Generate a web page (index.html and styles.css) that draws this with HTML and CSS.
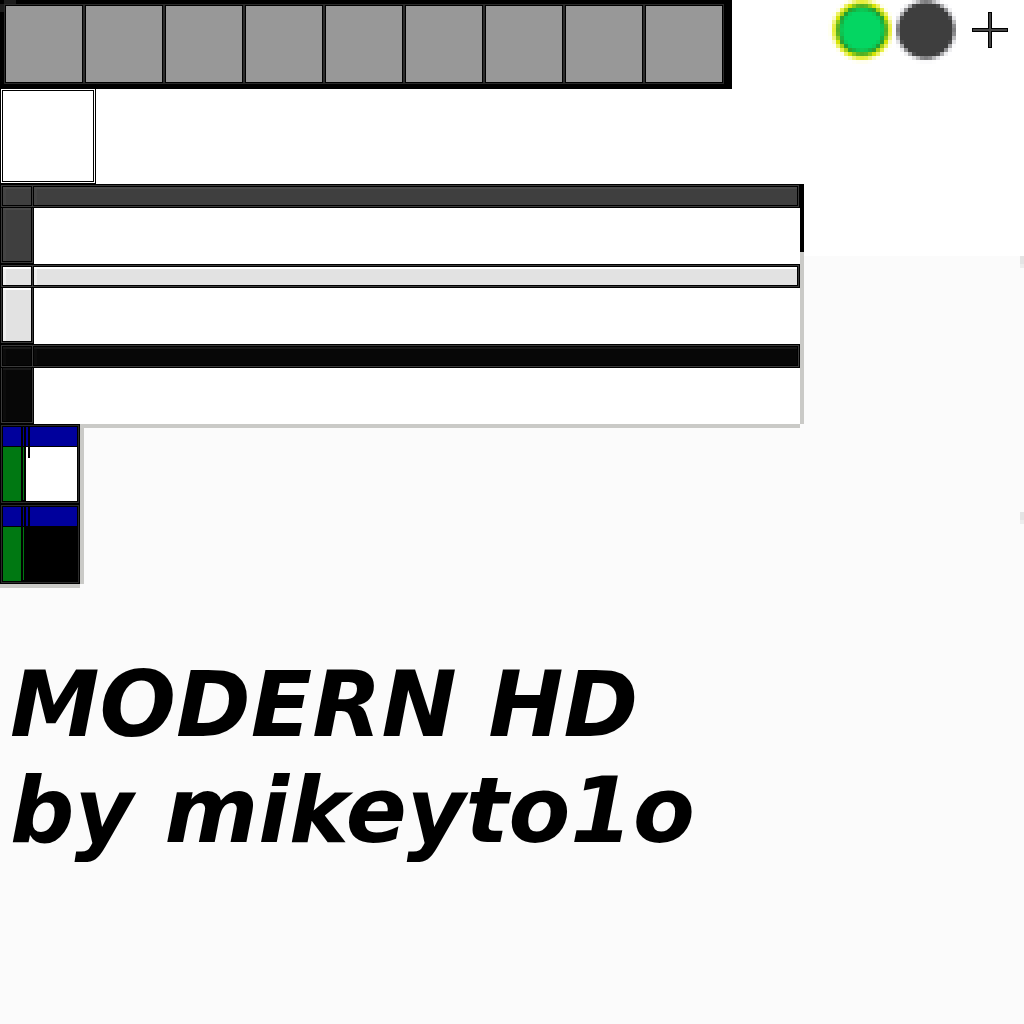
FILE: index.html
```html
<!DOCTYPE html>
<html lang="en">
<head>
<meta charset="utf-8">
<title>MODERN HD</title>
<link rel="stylesheet" href="styles.css">
</head>
<body>
<header class="top">
  <div class="hotbar">
    <span class="slot"></span><span class="slot"></span><span class="slot"></span>
    <span class="slot"></span><span class="slot"></span><span class="slot"></span>
    <span class="slot"></span><span class="slot"></span><span class="slot"></span>
  </div>
  <div class="icons">
    <svg class="orb" id="orb-on" viewBox="0 0 16 16" width="64" height="64" shape-rendering="crispEdges"></svg>
    <svg class="orb" id="orb-off" viewBox="0 0 16 16" width="64" height="64" shape-rendering="crispEdges"></svg>
    <svg class="cross" viewBox="0 0 36 36" width="36" height="36" shape-rendering="crispEdges">
      <path d="M16 0h4v16h16v4H20v16h-4V20H0v-4h16z" fill="#000"/>
      <path d="M17 1h2v16h16v2H19v16h-2V19H1v-2h16z" fill="#444"/>
    </svg>
  </div>
</header>
<main>
  <div class="selector"><div class="selector-inner"></div></div>
  <section class="bars">
    <button class="bar normal" aria-label="Normal">
      <span class="head"><span class="cell corner"></span><span class="cell long"></span></span>
      <span class="body"><span class="side"><span class="cell fill"></span></span></span>
    </button>
    <button class="bar light" aria-label="Highlighted">
      <span class="head"><span class="cell corner"></span><span class="cell long"></span></span>
      <span class="body"><span class="side"><span class="cell fill"></span></span></span>
    </button>
    <button class="bar dark" aria-label="Disabled">
      <span class="head"><span class="cell corner"></span><span class="cell long"></span></span>
      <span class="body"><span class="side"><span class="cell fill"></span></span></span>
    </button>
  </section>
  <section class="tiles">
    <button class="tile" aria-label="Tile">
      <span class="tile-grid">
        <span class="blue"></span><span class="blue"></span><span class="blue split"></span>
        <span class="green"></span><span class="green thin"></span><span class="pane white"></span>
      </span>
    </button>
    <button class="tile" aria-label="Tile, selected">
      <span class="tile-grid">
        <span class="blue"></span><span class="blue"></span><span class="blue split"></span>
        <span class="green"></span><span class="green thin"></span><span class="pane"></span>
      </span>
    </button>
  </section>
  <h1 class="title">MODERN HD<br>by mikeyto1o</h1>
</main>
<i class="tick tick-first"></i>
<i class="tick tick-second"></i>
<script src="script.js"></script>
</body>
</html>
```
FILE: styles.css
```css
* { box-sizing: border-box; }
body {
  margin: 0;
  min-height: 100vh;
  position: relative;
  background: linear-gradient(#fff 256px, #fbfbfb 256px);
  font-family: "DejaVu Sans", sans-serif;
}
button {
  display: block;
  padding: 0;
  border: 0;
  border-radius: 0;
  background: none;
}
.top {
  display: flex;
  justify-content: space-between;
  align-items: flex-start;
}
.hotbar {
  display: flex;
  padding: 4px 8px 5px 4px;
  background:
    linear-gradient(#1c1c1c, #1c1c1c) 4px 0 / 12px 4px no-repeat,
    linear-gradient(#1c1c1c, #1c1c1c) 0 4px / 4px 8px no-repeat,
    #000;
}
.slot {
  width: 80px;
  height: 80px;
  border: 1px solid #2b2b2b;
  background: #989898;
  box-shadow: inset 0 0 0 1px #000;
}
.icons {
  display: flex;
  padding-right: 16px;
}
.cross { margin: 12px 0 0 16px; }
.selector {
  width: 96px;
  height: 95px;
  padding: 1px;
  border: 1px solid #000;
  border-top: 0;
  background: #fff;
}
.selector-inner {
  height: 92px;
  border: 1px solid #000;
}
.bars {
  position: relative;
  max-width: 800px;
  box-shadow: 4px 0 #cacac7, 0 4px #cacac7;
}
.bars::after {
  content: "";
  position: absolute;
  top: 0;
  left: 100%;
  width: 4px;
  height: 68px;
  background: #000;
}
.bar {
  width: 100%;
  background: #fff;
}
.head {
  display: flex;
  gap: 1px;
  height: 24px;
  padding: 1px;
  border: 1px solid #000;
  background: #3a3a3a;
}
.cell { border: 1px solid #000; }
.corner { width: 30px; }
.long { flex: 1; }
.body { display: block; height: 56px; }
.side {
  display: block;
  width: 34px;
  height: 56px;
  padding: 0 1px 1px;
  border: 1px solid #000;
  border-top: 0;
  background: #3a3a3a;
}
.fill {
  display: block;
  height: 54px;
  border-top: 0;
}
.normal .cell {
  background: #3f3f3f;
  box-shadow: inset 0 2px #4a4a4a, inset 3px 0 #444;
}
.light .cell {
  background: #e2e2e2;
  box-shadow: inset 0 2px #fff, inset 3px 0 #eee;
}
.dark .cell {
  background: #070707;
  box-shadow: inset 0 2px #181818, inset 3px 0 #0c0c0c;
}
.tiles {
  position: relative;
  width: 80px;
  box-shadow: 4px 0 #cacac7, 0 4px #cacac7;
}
.tile {
  width: 80px;
  height: 80px;
  padding: 1px;
  border: 1px solid #000;
  background: #2b2b2b;
}
.tile-grid {
  display: grid;
  grid-template-columns: 18px 1px 51px;
  grid-template-rows: 19px 54px;
  column-gap: 2px;
  row-gap: 1px;
  height: 76px;
  padding: 1px;
  background: #000;
}
.blue { background: #00009c; }
.green { background: #007812; }
.thin { margin-bottom: 1px; }
.split { background: linear-gradient(90deg, #00009c 2px, #000 2px 4px, #00009c 4px); }
.white { background: linear-gradient(#000, #000) 2px 0 / 2px 11px no-repeat, #fff; }
.title {
  margin: 68px 0 0;
  padding-left: 10px;
  font-size: 90px;
  font-style: italic;
  font-weight: bold;
  line-height: 106px;
  color: #000;
}
.tick {
  position: absolute;
  right: 0;
  width: 4px;
  height: 12px;
  background: linear-gradient(#e4e4e4 8px, #ededed 8px);
}
.tick-first { top: 256px; }
.tick-second { top: 512px; }
```
FILE: script.js
```js
// Rings are listed from the outside in: [radius, [r, g, b]].
function drawOrb(id, rings) {
  const svg = document.getElementById(id);
  for (let row = 0; row < 16; row++) {
    for (let col = 0; col < 16; col++) {
      const sum = [0, 0, 0];
      for (let j = 0; j < 4; j++) {
        for (let i = 0; i < 4; i++) {
          const d = Math.hypot(col * 4 + i + 0.5 - 34, row * 4 + j + 0.5 - 30);
          let color = [255, 255, 255];
          for (const [radius, c] of rings) if (d < radius) color = c;
          color.forEach((v, k) => { sum[k] += v / 16; });
        }
      }
      if (sum[0] + sum[1] + sum[2] > 764) continue;
      const rect = document.createElementNS("http://www.w3.org/2000/svg", "rect");
      rect.setAttribute("x", col);
      rect.setAttribute("y", row);
      rect.setAttribute("width", 1);
      rect.setAttribute("height", 1);
      rect.setAttribute("fill", `rgb(${sum.map(Math.round).join(",")})`);
      svg.appendChild(rect);
    }
  }
}
drawOrb("orb-on", [[32, [254, 254, 225]], [29, [224, 232, 4]], [25, [34, 156, 48]], [21, [4, 214, 98]]]);
drawOrb("orb-off", [[32, [246, 246, 248]], [30, [190, 190, 194]], [28, [62, 62, 62]]]);
```
